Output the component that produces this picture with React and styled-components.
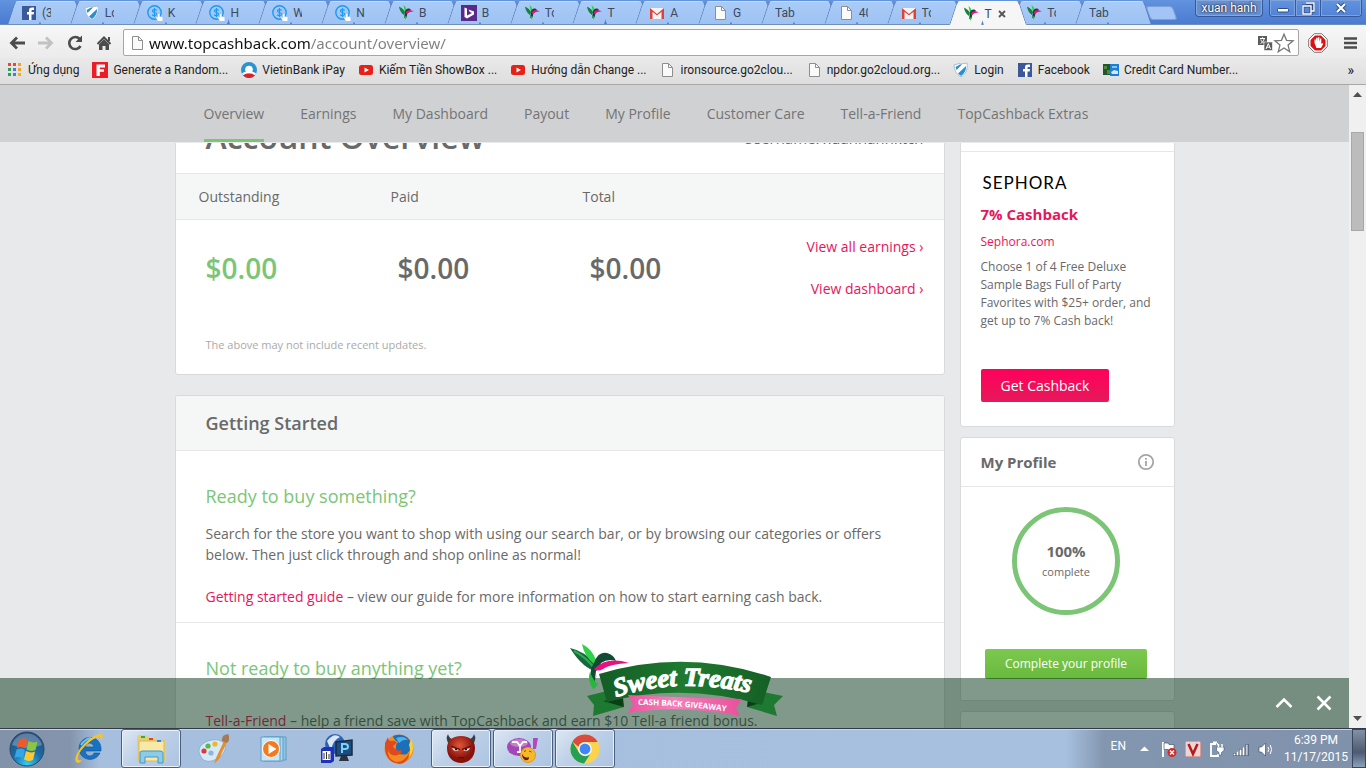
import React from "react";
import styled, { createGlobalStyle, css } from "styled-components";

const GlobalStyle = createGlobalStyle`
  *, *::before, *::after { box-sizing: border-box; }
  body { margin: 0; font-family: "Open Sans", "Noto Sans", sans-serif; font-size: 14px; color: #696969; }
  button, input { font: inherit; }
  button { border: 0; padding: 0; background: none; color: inherit; cursor: pointer; }
  a { text-decoration: none; color: inherit; }
  h1, h2, h3, p, ul { margin: 0; padding: 0; }
  ul { list-style: none; }
  svg { display: block; flex: none; }
`;

const ui = css`font-family: Roboto, "Noto Sans", sans-serif; font-size: 12px; line-height: 16px;`;

/* ---------- browser window ---------- */

const Desktop = styled.div`
  display: flex;
  flex-direction: column;
  height: 100vh;
  overflow: hidden;
`;

const TitleBar = styled.div`
  ${ui}
  display: flex;
  height: 25px;
  flex: none;
  padding: 0 4px 0 12px;
  background: linear-gradient(#6193df, #4a7bd0);
  border-bottom: 1px solid #6f8fbb;
`;

const Tabs = styled.div`
  display: flex;
  flex: 1;
  min-width: 0;
`;

const Tab = styled.button`
  position: relative;
  display: flex;
  align-items: center;
  gap: 5px;
  flex: 1 1 0;
  min-width: 0;
  height: ${(p) => (p.$active ? 25 : 24)}px;
  margin-bottom: ${(p) => (p.$active ? -1 : 0)}px;
  padding: 2px 0 0 9px;
  color: #3c4a5c;
  text-align: left;
  z-index: ${(p) => (p.$active ? 2 : 1)};
  &::before, &::after {
    content: "";
    position: absolute;
    z-index: -1;
    top: 1px;
    bottom: 0;
    background: ${(p) => (p.$active ? "#f6f6f6" : "linear-gradient(#a9cbf8, #9ec2f2)")};
    border-top: 1px solid ${(p) => (p.$active ? "#fff" : "#c6ddfb")};
  }
  &::before {
    left: -1px;
    right: 50%;
    border-left: 1px solid #5f84bd;
    border-top-left-radius: 4px;
    transform: skewX(-18deg);
  }
  &::after {
    left: 40%;
    right: -5px;
    border-right: 1px solid #5f84bd;
    border-top-right-radius: 4px;
    transform: skewX(18deg);
  }
`;

const TabTitle = styled.span`
  width: ${(p) => (p.$wide ? 22 : 9)}px;
  overflow: hidden;
  white-space: nowrap;
`;

const NewTab = styled.button`
  width: 27px;
  height: 14px;
  margin: 6px 20px 0 5px;
  border: 1px solid #7d9fd6;
  border-radius: 3px;
  background: #a3c5f5;
  transform: skewX(20deg);
`;

const UserButton = styled.button`
  width: 68px;
  height: 17px;
  margin-right: 6px;
  border: 1px solid #34599c;
  border-top: 0;
  border-radius: 0 0 4px 4px;
  background: #668fcf;
  box-shadow: inset 0 0 0 1px #87a8dc;
  color: #fff;
  text-shadow: 0 0 2px #223, 0 0 2px #223;
`;

const WindowButtons = styled.div`
  display: flex;
  height: 17px;
  border: 1px solid #34599c;
  border-top: 0;
  border-radius: 0 0 4px 4px;
  overflow: hidden;
`;

const WindowButton = styled.button`
  display: flex;
  align-items: center;
  justify-content: center;
  width: ${(p) => (p.$wide ? 41 : 25)}px;
  box-shadow: inset 0 0 0 1px #7ea2dc;
  & + & { border-left: 1px solid #34599c; }
`;

const Toolbar = styled.div`
  display: flex;
  align-items: center;
  flex: none;
  height: 33px;
  padding: 2px 8px 0;
  background: linear-gradient(#f7f7f7, #ebebeb);
`;

const NavButton = styled.button`
  display: flex;
  width: 18px;
  height: 18px;
  margin-right: 11px;
  align-items: center;
  justify-content: center;
`;

const AddressBar = styled.form`
  display: flex;
  align-items: center;
  flex: 1;
  height: 27px;
  margin-left: -1px;
  padding: 0 3px 0 5px;
  border: 1px solid #a6a6a6;
  border-radius: 2px;
  background: #fff;
`;

const Address = styled.input`
  flex: 1;
  min-width: 0;
  padding: 0;
  margin-left: 4px;
  border: 0;
  outline: 0;
  font-family: "Noto Sans", sans-serif;
  font-size: 15px;
  line-height: 22px;
  color: transparent;
  background: linear-gradient(90deg, #111 161px, #808080 161px);
  -webkit-background-clip: text;
  background-clip: text;
`;

const ToolbarEnd = styled.div`
  display: flex;
  align-items: center;
  gap: 16px;
  padding-left: 9px;
`;

const Bookmarks = styled.nav`
  ${ui}
  display: flex;
  align-items: center;
  flex: none;
  gap: 13px;
  height: 27px;
  padding: 0 12px 2px 7px;
  background: linear-gradient(#e9e9e9, #dedede);
  border-bottom: 1px solid #a8a8a8;
  color: #222;
`;

const Bookmark = styled.a`
  display: flex;
  align-items: center;
  gap: 5px;
  white-space: nowrap;
`;

const More = styled.button`
  margin-left: auto;
  font-size: 14px;
`;

/* ---------- web page ---------- */

const Viewport = styled.div`
  display: flex;
  flex: 1;
  min-height: 0;
`;

const Page = styled.div`
  position: relative;
  display: flex;
  flex-direction: column;
  flex: 1;
  min-width: 0;
  background: #e8e9eb;
`;

const SiteNav = styled.nav`
  display: flex;
  justify-content: center;
  flex: none;
  background: #d0d1d3;
  border-bottom: 1px solid #e9eaeb;
`;

const SiteNavList = styled.ul`
  display: flex;
  gap: 36px;
  width: 1000px;
  padding-left: 29px;
`;

const SiteNavLink = styled.a`
  display: block;
  height: 57px;
  line-height: 57px;
  color: #747474;
  white-space: nowrap;
  border-bottom: 3px solid ${(p) => (p.$active ? "#7cc576" : "transparent")};
`;

const Scroller = styled.main`
  flex: 1;
  min-height: 0;
  overflow: hidden;
`;

const Columns = styled.div`
  display: grid;
  grid-template-columns: minmax(0, 770px) 215px;
  gap: 15px;
  max-width: 1000px;
  margin: -50px auto 0;
`;

const Column = styled.div`
  display: flex;
  flex-direction: column;
  gap: ${(p) => p.$gap}px;
`;

const Card = styled.section`
  border: 1px solid #d9dadb;
  border-radius: 3px;
  background: #fff;
  overflow: hidden;
`;

const OverviewHeader = styled.header`
  display: flex;
  justify-content: space-between;
  align-items: flex-end;
  height: 80px;
  padding: 0 20px 13px 30px;
  border-bottom: 1px solid #e6e8e8;
`;

const PageTitle = styled.h1`
  font-size: 32px;
  line-height: 46px;
  font-weight: 600;
`;

const Username = styled.p`
  font-size: 15px;
  line-height: 21px;
  padding-bottom: 11px;
`;

const PinkLink = styled.a`
  color: #e8155b;
`;

const Totals = styled.table`
  width: 576px;
  table-layout: fixed;
  border-collapse: collapse;
  text-align: left;
  th { height: 45px; padding: 0 0 0 23px; font-weight: 400; }
  td { height: 97px; padding: 0 0 0 30px; font-size: 28px; line-height: 36px; font-weight: 600; }
  td:first-child { color: #7cc576; }
`;

const TotalsArea = styled.div`
  display: flex;
  justify-content: space-between;
  background: linear-gradient(#f5f7f6 45px, #e6e8e8 45px, #e6e8e8 46px, #fff 46px);
`;

const SideLinks = styled.div`
  display: flex;
  flex-direction: column;
  align-items: flex-end;
  gap: 21px;
  padding: 62px 20px 0 0;
  line-height: 21px;
`;

const Note = styled.p`
  padding: 20px 30px;
  font-size: 11px;
  line-height: 18px;
  color: #aaa;
`;

const CardHeader = styled.header`
  padding: 15px 30px;
  background: #f5f7f7;
  border-bottom: 1px solid #e6e8e8;
`;

const CardTitle = styled.h2`
  font-size: 18px;
  line-height: 24px;
  font-weight: 600;
`;

const Topic = styled.section`
  padding: 33px 30px 15px;
  line-height: 21px;
  & + & { border-top: 1px solid #e6e8e8; }
  p + p { margin-top: 21px; }
`;

const TopicTitle = styled.h3`
  margin-bottom: ${(p) => p.$space}px;
  font-size: 18px;
  line-height: 24px;
  font-weight: 400;
  color: #7cc576;
`;

const SideHeader = styled.header`
  display: flex;
  align-items: center;
  justify-content: space-between;
  height: ${(p) => (p.$tall ? 58 : 49)}px;
  padding: 0 19px 0 20px;
  border-bottom: 1px solid #e6e8e8;
`;

const SideTitle = styled.h2`
  font-size: 15px;
  line-height: 20px;
  font-weight: 700;
`;

const Offer = styled.div`
  display: flex;
  flex-direction: column;
  align-items: flex-start;
  padding: 20px 20px 24px;
  font-size: 12px;
  line-height: 18px;
`;

const StoreLogo = styled.div`
  padding-left: 2px;
  font-family: Lato, sans-serif;
  font-size: 17px;
  line-height: 22px;
  letter-spacing: 1px;
  color: #000;
`;

const OfferRate = styled.p`
  margin: 10px 0 9px;
  font-size: 15px;
  line-height: 20px;
  font-weight: 700;
  color: #e8155b;
`;

const OfferText = styled.p`
  margin: 7px -4px 39px 0;
`;

const ActionButton = styled.button`
  border-radius: 2px;
  color: #fff;
  ${(p) =>
    p.$green
      ? css`padding: 6px 20px; font-size: 12px; line-height: 18px; background: linear-gradient(#7cc84f, #69b93c);`
      : css`padding: 6px 20px; font-size: 14px; line-height: 21px; background: linear-gradient(#ff005b, #e6195a);`}
`;

const Progress = styled.div`
  display: flex;
  flex-direction: column;
  align-items: center;
  padding: 20px 2px 21px 0;
`;

const Ring = styled.div`
  display: flex;
  flex-direction: column;
  align-items: center;
  justify-content: center;
  gap: 2px;
  width: 108px;
  height: 108px;
  margin-bottom: 34px;
  border: 5px solid #7cc576;
  border-radius: 50%;
  font-size: 11px;
  line-height: 18px;
  strong { font-size: 15px; line-height: 20px; }
`;

const Promo = styled.aside`
  position: absolute;
  left: 0;
  right: 0;
  bottom: 0;
  display: flex;
  justify-content: flex-end;
  align-items: center;
  gap: 20px;
  height: 50px;
  padding-right: 15px;
  background: rgba(3, 51, 21, 0.5);
`;

const PromoBadge = styled.a`
  position: absolute;
  left: 50%;
  bottom: 8px;
  margin-left: -105px;
`;

const IconButton = styled.button`
  display: flex;
`;

const ScrollBar = styled.div`
  display: flex;
  flex-direction: column;
  align-items: center;
  justify-content: space-between;
  width: 17px;
  padding: 5px 0;
  background: #f0f0f0;
`;

const ScrollThumb = styled.div`
  width: 13px;
  height: 99px;
  margin: 33px 0 auto;
  border: 1px solid #a8a8a8;
  background: #bcbcbc;
`;

/* ---------- taskbar ---------- */

const Taskbar = styled.footer`
  ${ui}
  display: flex;
  flex: none;
  height: 40px;
  border-top: 1px solid #32394a;
  box-shadow: inset 0 1px 0 #c7d6ea;
  background: linear-gradient(90deg, #8292a9 0, #8494ac 70px, #a6bfde 100px, #a7c0df calc(100% - 300px), #8396b0 calc(100% - 262px), #8092ab 100%);
`;

const StartButton = styled.button`
  display: flex;
  align-items: center;
  padding: 0 14px 0 9px;
`;

const Apps = styled.div`
  display: flex;
  gap: 2px;
`;

const AppButton = styled.button`
  display: flex;
  align-items: center;
  justify-content: center;
  width: 60px;
  border: 1px solid transparent;
  border-radius: 3px;
  ${(p) =>
    p.$open &&
    css`
      border-color: #4d5f7b;
      background: linear-gradient(135deg, #dde7f3, #bdd0e8 45%, #adc4e1);
      box-shadow: inset 0 0 0 1px #e8f0f9;
    `}
`;

const Tray = styled.div`
  display: flex;
  align-items: center;
  margin-left: auto;
  color: #fff;
`;

const Language = styled.button`
  margin-right: 14px;
  padding-bottom: 5px;
`;

const ShowHidden = styled.button`
  margin-right: 12px;
`;

const TrayIcons = styled.div`
  display: flex;
  align-items: center;
  gap: 8px;
`;

const Clock = styled.time`
  width: 72px;
  margin-left: 7px;
  text-align: center;
  line-height: 17px;
`;

const ShowDesktop = styled.button`
  align-self: stretch;
  width: 14px;
  border: 1px solid #39465c;
  background: linear-gradient(#8391a6, #4d5b72 60%, #8ba0bb);
`;

/* ---------- drawings ---------- */

const Icon = ({ s = 16, box = 16, children }) => (
  <svg width={s} height={s} viewBox={`0 0 ${box} ${box}`} aria-hidden="true">{children}</svg>
);

const Facebook = () => (
  <Icon><rect x="1" y="1" width="14" height="14" fill="#3b5998" />
    <path d="M8 15V9.500H6V7h2V5.300C8 3.200 9.200 2.500 11 2.500h2V5h-1.300c-.9 0-1.200.3-1.200 1V7H13l-.3 2.500h-2.200V15z" fill="#fff" /></Icon>
);
const Shield = () => (
  <Icon><path d="M1 3l5-1.500L8 2l6-1c1 6-1 11-6 14C3 12 1.500 8 1 3z" fill="#fff" stroke="#a9bfd2" />
    <path d="M2.500 5L7 2.500h2L3.500 8zM5 11.500L13 4c.4 4-1.500 7.500-5 10z" fill="#2a8fd0" /></Icon>
);
const Dollar = () => (
  <Icon><circle cx="7.500" cy="7.500" r="6.700" fill="none" stroke="#1a9af0" strokeWidth="1.400" />
    <path d="M9.800 5.300C8.600 4.300 5.400 4.200 5.400 6c0 1.900 4.400 1 4.400 3.100 0 1.700-3 1.900-4.700.6M7.500 3v9" fill="none" stroke="#1a9af0" strokeWidth="1.100" />
    <path d="M11 16l-2-3 1-1 1 .8V9h1.500v2.500l3 .8V16z" fill="#fff" /></Icon>
);
const Bird = () => (
  <Icon><path d="M1 1.500C4 3 6 5 7 7L5.800 10C3 8 1.500 5 1 1.500z" fill="#17803a" /><path d="M5.500 0C8 2 8.800 4 8.500 6.500L7 7z" fill="#2bd045" />
    <path d="M7 6.500C8 3.500 11 2.500 13 5L9.500 8 8.500 12.500 6 13z" fill="#0e4a36" /><path d="M6 10.500L8.500 12 7.500 15z" fill="#27c840" />
    <path d="M7.500 7.500C10 4.500 13 5 16 6.500 12 6.500 11 7.500 9 9z" fill="#e6147d" /></Icon>
);
const Bing = () => (
  <Icon><rect width="16" height="16" fill="#5a2a8a" /><path d="M3.500 2.500l2.500 1v7l5-2.500-2.200-1L7.500 4.500 13 6.500v3L6 13.500l-2.500-1.400z" fill="#fff" /></Icon>
);
const Gmail = () => (
  <Icon><path d="M1 3h14v11H1z" fill="#f3f3f3" /><path d="M1 3l7 6 7-6v11h-2.500V6.800L8 10.500 3.500 6.800V14H1z" fill="#db4437" /></Icon>
);
const File = () => (
  <Icon><path d="M3.500 1.500h6l4 4v9h-10z" fill="#fafafa" stroke="#8e8e8e" /><path d="M9.500 1.500v4h4" fill="none" stroke="#8e8e8e" /></Icon>
);
const AppsGrid = () => (
  <Icon>{["#e8453c", "#e8453c", "#f0a030", "#2e9e50", "#3f7fe8", "#f0a030", "#2e9e50", "#3f7fe8", "#f5b400"].map((c, i) => (
    <rect key={i} x={1 + (i % 3) * 5} y={1 + Math.floor(i / 3) * 5} width="3" height="3" fill={c} />))}</Icon>
);
const RedF = () => (
  <Icon><rect width="16" height="16" fill="#ee1c25" /><path d="M4.500 2.500H13v3H7.800v1.700H12v2.600H7.800V14H4.500z" fill="#fff" /></Icon>
);
const Vietin = () => (
  <Icon><circle cx="8" cy="8" r="8" fill="#2a94d2" /><path d="M2 13.300C5 9.500 11 9.500 14 13.300A8 8 0 0 1 2 13.300z" fill="#d8232c" />
    <circle cx="8" cy="7.500" r="3.800" fill="#fff" /><path d="M1 11.500c4-3 10-3 14 0l-1.200 1.800C11 10.500 5 10.500 2.200 13.300z" fill="#fff" /></Icon>
);
const YouTube = () => (
  <Icon><rect x="1" y="3" width="14" height="10" rx="2.500" fill="#e62117" /><path d="M6.500 5.500v5L11 8z" fill="#fff" /></Icon>
);
const CardIcon = () => (
  <Icon><rect y="2" width="8" height="11" fill="#24552c" /><path d="M1 4h3v3H1zM4 8h3v4H4z" fill="#4e8b3b" /><rect x="7" y="2" width="9" height="12" fill="#1d7fd4" />
    <path d="M8 10l3-2 4 1v3H9z" fill="#d9e6f2" /><path d="M9 4h5v2H9z" fill="#7fc2f5" /></Icon>
);

const BackArrow = ({ flip }) => (
  <Icon s={18} box={18}><path transform={flip ? "matrix(-1 0 0 1 18 0)" : undefined} d="M17 9H4M9 3.500L3.500 9 9 14.500" fill="none" stroke={flip ? "#c2c2c2" : "#4c4c4c"} strokeWidth="2.800" /></Icon>
);
const Reload = () => (
  <Icon s={18} box={18}><path d="M14.500 12a6 6 0 1 1-.8-7" fill="none" stroke="#4c4c4c" strokeWidth="2.600" /><path d="M16 1.500v6.500H9.500z" fill="#4c4c4c" /></Icon>
);
const Home = () => (
  <Icon s={18} box={18}><path d="M2.500 10L9 3.500l6.500 6.500M14 3v4" fill="none" stroke="#4c4c4c" strokeWidth="2" /><path d="M4 10.200l5-5 5 5V16h-3.500v-4h-3v4H4z" fill="#4c4c4c" /></Icon>
);
const Translate = () => (
  <Icon><rect x="1" y="1" width="9" height="9" fill="#5c5c5c" /><path d="M3 3.500h5M5.500 2.200v1.300M3.500 8.500c2-1 3.300-2.500 3.700-5M3.800 4.500c.7 2 2 3.200 3.800 4" fill="none" stroke="#fff" />
    <rect x="7" y="7" width="8.500" height="8.500" fill="#5c5c5c" stroke="#fff" strokeWidth=".6" /><path d="M9 14l2.300-5.500L13.600 14M9.800 12.200h3" fill="none" stroke="#fff" /></Icon>
);
const Star = () => (
  <Icon s={22} box={20}><path d="M10 2l2.300 5.600 6 .4-4.600 3.900 1.500 6L10 14.600 4.800 17.900l1.500-6L1.700 8l6-.4z" fill="#fff" stroke="#777" strokeWidth="1.200" /></Icon>
);
const AdBlock = () => (
  <Icon s={20} box={20}><path d="M6.300.7h7.400l5.600 5.600v7.400l-5.600 5.600H6.300L.7 13.700V6.300z" fill="#fff" stroke="#777" /><path d="M7 2.500h6L17.500 7v6L13 17.500H7L2.500 13V7z" fill="#dd1016" />
    <path d="M6.500 10V6.500h1.300V9l.4-4.200h1.400V9L10 4.200h1.300L11.500 9l.6-3.500h1.200V11l1.200-1 .8.800-2.300 4.200H8.500z" fill="#fff" /></Icon>
);
const Menu = () => (
  <Icon s={14} box={14}><path d="M0 2.500h13M0 7h13M0 11.500h13" stroke="#4c4c4c" strokeWidth="2.600" /></Icon>
);
const Info = () => (
  <Icon s={18} box={18}><circle cx="9" cy="9" r="7.200" fill="none" stroke="#a5a5a5" strokeWidth="1.800" /><path d="M9 8v5M9 5v1.800" stroke="#a5a5a5" strokeWidth="1.800" /></Icon>
);
const Arrow = ({ down }) => (
  <Icon s={9} box={9}><path d={down ? "M0 2h9L4.500 7z" : "M0 7h9L4.500 2z"} fill="#505050" /></Icon>
);

const PromoArt = () => (
  <svg width="214" height="76" viewBox="0 0 214 76" role="img" aria-label="Sweet Treats Cash Back Giveaway">
    <defs>
      <linearGradient id="ribbon" x2="1"><stop offset="0" stopColor="#145c26" /><stop offset=".5" stopColor="#1f7a2f" /><stop offset="1" stopColor="#155f26" /></linearGradient>
      <linearGradient id="pink" x2="1"><stop offset="0" stopColor="#e9559f" /><stop offset=".4" stopColor="#f580ba" /><stop offset="1" stopColor="#ea4f9c" /></linearGradient>
      <path id="curveTop" d="M46 53Q115 30 200 54" />
      <path id="curveLow" d="M68 61Q115 61 175 70" />
    </defs>
    <path d="M17 52l20-5 17 16-31 9 1-11zM213 52l-20-4-16 15 30 9-3-11z" fill="#1e7a31" />
    <path d="M33 57l21 6-1-9zM194 58l-17 5 1-9z" fill="#0b3d16" />
    <path d="M29 30Q115 4 201 33l-9 28Q113 38 37 58z" fill="url(#ribbon)" />
    <path d="M58 51q57 3 114 4l-6 9 4 8Q112 60 58 69l5-9z" fill="url(#pink)" />
    <path d="M0 4Q14 7 26 20l2 8Q13 25 0 4z" fill="#17683e" /><path d="M12 0q10 5 14 16l-1 5Q14 12 12 0z" fill="#2fd147" />
    <path d="M4 7q12 6 21 18" fill="none" stroke="#2fa94f" strokeWidth="2" />
    <path d="M24 19q4-12 13-10 7 2 9 8-8-3-15 2L24 39q-7-10 0-20z" fill="#124b35" />
    <path d="M23 45q-6-9-3-17 4 10 8 12l-3 4z" fill="#24b83d" />
    <path d="M26 27q10-10 22-8l-8 6q-12 1-15 10z" fill="#fff" />
    <path d="M24 25Q37 12 59 19 40 20 33 25q-5 3-9 0z" fill="#ec0f80" />
    <text fontFamily="'Liberation Serif', serif" fontSize="26" fontWeight="700" fontStyle="italic" fill="#fff" stroke="#fff" strokeWidth="1.200"><textPath href="#curveTop">Sweet Treats</textPath></text>
    <text fontFamily="'Open Sans', sans-serif" fontSize="8" fontWeight="700" fill="#fff"><textPath href="#curveLow">CASH BACK GIVEAWAY</textPath></text>
  </svg>
);

const Orb = () => (
  <Icon s={36} box={36}>
    <defs><radialGradient id="orb" cx=".5" cy=".95" r=".9"><stop offset="0" stopColor="#2fd0ff" /><stop offset=".5" stopColor="#1b6aa5" /><stop offset="1" stopColor="#28527f" /></radialGradient></defs>
    <circle cx="18" cy="18" r="17" fill="url(#orb)" stroke="#25496d" /><path d="M3 14a15.500 15.500 0 0 1 30 0q-15 6-30 0z" fill="#fff" opacity=".25" />
    <path d="M10 8.500q4.500-2 8.500.5l-2 8.500q-4.500-2.500-8.500-.5z" fill="#f1592a" /><path d="M19.500 10q4.500 2.500 9 .5l-2 8.500q-5 2-9-.5z" fill="#8cc63f" />
    <path d="M7.500 18.500q4.500-2 8.500.5l-2 8.500q-4.500-2.500-8.500-.5z" fill="#35a5e5" /><path d="M17 20q4.500 2.500 9 .5l-2 8.500q-5 2-9-.5z" fill="#fdc82f" />
  </Icon>
);
const IE = () => (
  <Icon s={32} box={32}><path d="M27 20A11 11 0 1 1 28 15v3H12q1 5 5 5 3 0 4-3zM12 14h9q-1-4-4.500-4T12 14z" fill="#1673c4" stroke="#0d5290" strokeWidth=".6" fillRule="evenodd" />
    <path d="M8 12q4-6 10-7" stroke="#6fc5f7" strokeWidth="2" fill="none" /><path d="M5 30C-1 29 4 17 13 9S30-1 30 3q0 2-2 5 1-4-2-4-6 1-14 9T5 26q0 2 4 1-2 3-4 3z" fill="#f7c325" /></Icon>
);
const Explorer = () => (
  <Icon s={32} box={32}><path d="M2 5l1-3h9l2 3h6l2 2h9v22H2z" fill="#e8cd72" /><path d="M4 8h25v20H4z" fill="#f8e9a6" stroke="#d8b95a" /><path d="M6 3h4v2H6z" fill="#2fae3b" /><path d="M14 5h4v2h-4z" fill="#e4402f" /><path d="M22 7h4v2h-4z" fill="#2b87e0" />
    <path d="M5 30V20q0-2 2-2h18q3 0 3 2v10h-5v-6H10v6z" fill="#8ccbe9" stroke="#4597c4" /></Icon>
);
const Paint = () => (
  <Icon s={32} box={32}><path d="M3 22C-2 12 12 5 22 7q8 3 6 10-3 8-13 11Q6 30 3 22z" fill="#d5e9f7" stroke="#86b4d4" /><circle cx="7" cy="18" r="2.600" fill="#dc3b34" /><circle cx="11" cy="13" r="2.600" fill="#5fb548" /><circle cx="18" cy="11" r="2.600" fill="#f2b42c" /><circle cx="14" cy="20" r="2.600" fill="#8cb7d8" />
    <path d="M17 31l2-6 8-17 3 1-8 17-5 5z" fill="#e88d2e" /><path d="M25 8q-1-6 6-7 3 5-1 9z" fill="#a77a55" /></Icon>
);
const Media = () => (
  <Icon s={32} box={32}><path d="M8 4h19v23H8z" fill="#8ec5e3" stroke="#5d9ec5" /><path d="M5 4h19v24H5z" fill="#abd7ee" stroke="#5d9ec5" /><path d="M2 4h19v24H2z" fill="#c8e6f5" stroke="#5d9ec5" />
    <circle cx="12" cy="16" r="8.500" fill="#f47a1f" stroke="#fff" /><path d="M9.500 11v10l8-5z" fill="#fff" /></Icon>
);
const Proxy = () => (
  <Icon s={32} box={32}><circle cx="14" cy="11" r="10" fill="#2e62b4" /><path d="M6 8q7-9 13-4-7 3-9 13z" fill="#d9e6f5" /><path d="M0 16l3-2h10v14l-3 2H0z" fill="#1e31b8" /><path d="M1.500 18h8v9h-8z" fill="#fff" /><path d="M3 20v6M5.500 19v7M8 21v5" stroke="#333" />
    <path d="M15 9l16-2v15l-16 1z" fill="#1c4d80" stroke="#1a2b42" strokeWidth="1.500" /><path d="M21 20v-9h3q3 0 3 2.500T24 16h-3" fill="none" stroke="#7fd0f5" strokeWidth="2" /><path d="M20 23h6l2 5H18z" fill="#2c333d" /></Icon>
);
const Firefox = () => (
  <Icon s={32} box={32}><circle cx="16" cy="16" r="14.500" fill="#f58a1f" /><path d="M10 3q14-5 19 9-1 5-5 9-8 2-11-3-1-6 2-9-4-2-5-6z" fill="#1c6fb9" /><path d="M13 5q8-3 12 2-5-1-9 3z" fill="#4eb3e8" />
    <path d="M2 10l3-6q0 4 3 4 4-1 6 2l-4 3q3 6 8 4 2 3-3 5-8 2-10-5-1 9 8 12 9 0 13-9 0 9-9 11Q1 30 2 10z" fill="#df4a1e" /><path d="M28 6q5 10-2 19 2-9 0-13z" fill="#fbd13a" /></Icon>
);
const Devil = () => (
  <Icon s={32} box={32}><defs><radialGradient id="devil" cx=".45" cy=".35"><stop offset="0" stopColor="#e35437" /><stop offset="1" stopColor="#86120c" /></radialGradient></defs>
    <path d="M4 11Q0 6 3 1q1 5 7 6zM28 11q4-5 1-10-1 5-7 6z" fill="#3a3f46" /><path d="M16 3c9 0 14 5 14 12 0 10-7 15-14 15S2 25 2 15C2 8 7 3 16 3z" fill="url(#devil)" />
    <path d="M7 15l7 2q-5 3-7-2zM25 15l-7 2q5 3 7-2z" fill="#f4f4f4" /><path d="M6 13l9 3.500M26 13l-9 3.500" stroke="#5d0d08" strokeWidth="1.200" /><circle cx="11" cy="16.500" r="1" /><circle cx="21" cy="16.500" r="1" /><path d="M13 25q3-1 6 0" stroke="#5e0906" fill="none" /></Icon>
);
const Yahoo = () => (
  <Icon s={32} box={32}><ellipse cx="12" cy="14" rx="12" ry="9" fill="#a546b6" /><ellipse cx="12" cy="10" rx="9" ry="4" fill="#d9a3e0" opacity=".6" /><path d="M5 9h5l3 4 3-4h4M13 13v6M10 19h6" fill="none" stroke="#fff" strokeWidth="1.800" />
    <path d="M26 5h5l-2 11h-3z" fill="#b349bf" /><circle cx="21" cy="22" r="7.500" fill="#f7b92c" stroke="#e09a1c" /><path d="M15 21q3 5 7 3 0 4-4 3-3-2-3-6z" fill="#63200c" /><path d="M17 18.500l2-1M22 18l2.500 1" stroke="#7a4a08" /></Icon>
);
const Chrome = () => (
  <Icon s={30} box={32}><circle cx="16" cy="16" r="15.500" fill="#fbd34d" /><path d="M2.600 8.200A15.500 15.500 0 0 1 29.500 8.500H16a7.500 7.500 0 0 0-7 5z" fill="#dc4a3e" /><path d="M2.600 8.200A15.500 15.500 0 0 0 15 31.500l6.500-10A7.500 7.500 0 0 1 9.500 19.500z" fill="#23a055" />
    <circle cx="16" cy="16" r="7.300" fill="#fff" /><circle cx="16" cy="16" r="5.800" fill="#4285f4" /></Icon>
);

const TrayUp = () => <Icon s={9} box={9}><path d="M0 7l4.500-4.500L9 7z" fill="#fff" /></Icon>;
const Flag = () => (
  <Icon><path d="M2 1v15" stroke="#fff" strokeWidth="2" /><path d="M3 2h4l1 1.500h5V10H8L7 8.500H3z" fill="#fff" stroke="#33445c" strokeWidth=".6" /><circle cx="11" cy="11.500" r="4.500" fill="#d52a26" /><path d="M9 9.500l4 4m0-4l-4 4" stroke="#fff" strokeWidth="1.500" /></Icon>
);
const VKey = () => (
  <Icon><rect width="16" height="16" fill="#f1d4d2" stroke="#b66" /><path d="M3.500 3L8 13l4.500-10" fill="none" stroke="#b01c1c" strokeWidth="2.500" /></Icon>
);
const Plug = () => (
  <Icon><path d="M7 3H2v12h7v-2M4 1.500h4M8 3h1" fill="none" stroke="#fff" strokeWidth="1.800" /><path d="M7.500 6h7.500v3.500l-2.500 2V14h-2.500v-2.500l-2.500-2z" fill="#fff" stroke="#33445c" strokeWidth=".5" /><path d="M9.500 3v3M13 3v3" stroke="#fff" strokeWidth="1.500" /></Icon>
);
const Signal = () => (
  <Icon><path d="M1.500 15v-3M4.500 15v-4.500M7.500 15V8M10.500 15V6M14 15V3" stroke="#33445c" strokeWidth="3" /><path d="M1.500 14.500v-2M4.500 14.500v-4M7.500 14.500v-6M10.500 14.500V6.300" stroke="#fff" strokeWidth="2" /><path d="M13.800 14.500V3.500" stroke="#c2cad6" strokeWidth="2" /></Icon>
);
const Speaker = () => (
  <Icon><path d="M2 6h2.500L8.500 2v13l-4-4H2z" fill="#fff" stroke="#33445c" strokeWidth=".6" /><path d="M11 6q1.500 2.500 0 5M13.300 4q2.500 4.500 0 9" fill="none" stroke="#fff" /></Icon>
);

/* ---------- data ---------- */

const tabs = [
  [Facebook, "(3"], [Shield, "Lo"], [Dollar, "K"], [Dollar, "H"], [Dollar, "W"], [Dollar, "N"],
  [Bird, "B"], [Bing, "B"], [Bird, "To"], [Bird, "T"], [Gmail, "A"], [File, "G"], [null, "Tab"],
  [File, "40"], [Gmail, "To"], [Bird, "T", true], [Bird, "To"], [null, "Tab"],
];

const bookmarks = [
  [AppsGrid, "Ứng dụng"], [RedF, "Generate a Random..."], [Vietin, "VietinBank iPay"],
  [YouTube, "Kiếm Tiền ShowBox ..."], [YouTube, "Hướng dẫn Change ..."], [File, "ironsource.go2clou..."],
  [File, "npdor.go2cloud.org..."], [Shield, "Login"], [Facebook, "Facebook"], [CardIcon, "Credit Card Number..."],
];

const siteLinks = ["Overview", "Earnings", "My Dashboard", "Payout", "My Profile", "Customer Care", "Tell-a-Friend", "TopCashback Extras"];

const apps = [
  ["Internet Explorer", IE], ["Explorer", Explorer, true], ["Paint", Paint], ["Media Player", Media], ["Proxy", Proxy],
  ["Firefox", Firefox], ["Devil", Devil, true], ["Yahoo Messenger", Yahoo, true], ["Chrome", Chrome, true],
];

export default function App() {
  return (
    <Desktop>
      <GlobalStyle />
      <TitleBar>
        <Tabs>
          {tabs.map(([TabIcon, title, active], i) => (
            <Tab key={i} $active={active}>
              {TabIcon && <TabIcon />}
              <TabTitle $wide={!TabIcon}>{title}</TabTitle>
              {active && <Icon s={8} box={8}><path d="M1 1l6 6M7 1L1 7" stroke="#555" strokeWidth="1.800" /></Icon>}
            </Tab>
          ))}
        </Tabs>
        <NewTab aria-label="New tab" />
        <UserButton>xuan hanh</UserButton>
        <WindowButtons>
          <WindowButton aria-label="Minimize"><Icon s={12} box={12}><rect x=".5" y="6.500" width="11" height="3.500" rx="1" fill="#fff" stroke="#2c4c85" /></Icon></WindowButton>
          <WindowButton aria-label="Restore"><Icon s={13} box={13}><path d="M4 1h8v8h-2.500M1 4h8v8H1z" fill="none" stroke="#2c4c85" strokeWidth="3" /><path d="M4 1h8v8h-2.500M1 4h8v8H1z" fill="none" stroke="#fff" strokeWidth="1.400" /></Icon></WindowButton>
          <WindowButton $wide aria-label="Close"><Icon s={12} box={12}><path d="M2 2l8 8M10 2l-8 8" stroke="#2c4c85" strokeWidth="4" /><path d="M2 2l8 8M10 2l-8 8" stroke="#fff" strokeWidth="2.200" /></Icon></WindowButton>
        </WindowButtons>
      </TitleBar>
      <Toolbar>
        <NavButton aria-label="Back"><BackArrow /></NavButton>
        <NavButton aria-label="Forward"><BackArrow flip /></NavButton>
        <NavButton aria-label="Reload"><Reload /></NavButton>
        <NavButton aria-label="Home"><Home /></NavButton>
        <AddressBar>
          <File />
          <Address aria-label="Address" defaultValue="www.topcashback.com/account/overview/" />
          <Translate />
          <IconButton type="button" aria-label="Bookmark this page"><Star /></IconButton>
        </AddressBar>
        <ToolbarEnd>
          <IconButton aria-label="AdBlock"><AdBlock /></IconButton>
          <IconButton aria-label="Menu"><Menu /></IconButton>
        </ToolbarEnd>
      </Toolbar>
      <Bookmarks>
        {bookmarks.map(([MarkIcon, label]) => (
          <Bookmark key={label} href="#"><MarkIcon />{label}</Bookmark>
        ))}
        <More>»</More>
      </Bookmarks>

      <Viewport>
        <Page>
          <SiteNav>
            <SiteNavList>
              {siteLinks.map((label, i) => (
                <li key={label}><SiteNavLink href="#" $active={i === 0}>{label}</SiteNavLink></li>
              ))}
            </SiteNavList>
          </SiteNav>
          <Scroller>
            <Columns>
              <Column $gap={20}>
                <Card>
                  <OverviewHeader>
                    <PageTitle>Account Overview</PageTitle>
                    <Username>Username: <PinkLink href="#">xuanhanhktcn</PinkLink></Username>
                  </OverviewHeader>
                  <TotalsArea>
                    <Totals>
                      <thead><tr><th>Outstanding</th><th>Paid</th><th>Total</th></tr></thead>
                      <tbody><tr><td>$0.00</td><td>$0.00</td><td>$0.00</td></tr></tbody>
                    </Totals>
                    <SideLinks>
                      <PinkLink href="#">View all earnings ›</PinkLink>
                      <PinkLink href="#">View dashboard ›</PinkLink>
                    </SideLinks>
                  </TotalsArea>
                  <Note>The above may not include recent updates.</Note>
                </Card>
                <Card>
                  <CardHeader><CardTitle>Getting Started</CardTitle></CardHeader>
                  <Topic>
                    <TopicTitle $space={15}>Ready to buy something?</TopicTitle>
                    <p>Search for the store you want to shop with using our search bar, or by browsing our categories or offers below. Then just click through and shop online as normal!</p>
                    <p><PinkLink href="#">Getting started guide</PinkLink> – view our guide for more information on how to start earning cash back.</p>
                  </Topic>
                  <Topic>
                    <TopicTitle $space={30}>Not ready to buy anything yet?</TopicTitle>
                    <p><PinkLink href="#">Tell-a-Friend</PinkLink> – help a friend save with TopCashback and earn $10 Tell-a friend bonus.</p>
                  </Topic>
                </Card>
              </Column>
              <Column $gap={10}>
                <Card>
                  <SideHeader $tall />
                  <Offer>
                    <StoreLogo>SEPHORA</StoreLogo>
                    <OfferRate>7% Cashback</OfferRate>
                    <PinkLink href="#">Sephora.com</PinkLink>
                    <OfferText>Choose 1 of 4 Free Deluxe Sample Bags Full of Party Favorites with $25+ order, and get up to 7% Cash back!</OfferText>
                    <ActionButton>Get Cashback</ActionButton>
                  </Offer>
                </Card>
                <Card>
                  <SideHeader><SideTitle>My Profile</SideTitle><Info /></SideHeader>
                  <Progress>
                    <Ring><strong>100%</strong>complete</Ring>
                    <ActionButton $green>Complete your profile</ActionButton>
                  </Progress>
                </Card>
                <Card><SideHeader /></Card>
              </Column>
            </Columns>
          </Scroller>
          <Promo>
            <PromoBadge href="#"><PromoArt /></PromoBadge>
            <IconButton aria-label="Expand"><Icon s={20} box={20}><path d="M2.500 14L10 6.500l7.500 7.500" fill="none" stroke="#fff" strokeWidth="2.500" /></Icon></IconButton>
            <IconButton aria-label="Close"><Icon s={20} box={20}><path d="M3.500 3.500l13 13M16.500 3.500l-13 13" stroke="#fff" strokeWidth="2.500" /></Icon></IconButton>
          </Promo>
        </Page>
        <ScrollBar><Arrow /><ScrollThumb /><Arrow down /></ScrollBar>
      </Viewport>

      <Taskbar>
        <StartButton aria-label="Start"><Orb /></StartButton>
        <Apps>
          {apps.map(([name, AppIcon, open]) => (
            <AppButton key={name} $open={open} aria-label={name}><AppIcon /></AppButton>
          ))}
        </Apps>
        <Tray>
          <Language>EN</Language>
          <ShowHidden aria-label="Show hidden icons"><TrayUp /></ShowHidden>
          <TrayIcons><Flag /><VKey /><Plug /><Signal /><Speaker /></TrayIcons>
          <Clock>6:39 PM<br />11/17/2015</Clock>
          <ShowDesktop aria-label="Show desktop" />
        </Tray>
      </Taskbar>
    </Desktop>
  );
}
